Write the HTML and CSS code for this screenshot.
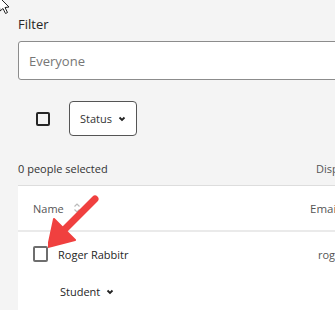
FILE: index.html
```html
<!DOCTYPE html>
<html>
<head>
<meta charset="utf-8">
<link rel="stylesheet" href="styles.css">
</head>
<body>
<div class="page">
  <div class="filter-label">Filter</div>
  <div class="filter-input">Everyone</div>
  <div class="toolbar">
    <span class="checkbox dark"></span>
    <button class="status-btn">Status <svg class="chev" width="8" height="6" viewBox="0 0 8 6"><path d="M1.5 1.5 L4 4 L6.5 1.5" fill="none" stroke="#222" stroke-width="1.8"/></svg></button>
  </div>
  <div class="selected-row">
    <span class="sel-text">0 people selected</span>
    <span class="disp">Display</span>
  </div>
  <div class="table">
    <div class="thead">
      <span class="th-name">Name <svg class="sort" width="8" height="12" viewBox="0 0 8 12"><path d="M1.5 4.5 L4 2 L6.5 4.5 M1.5 7.5 L4 10 L6.5 7.5" fill="none" stroke="#bbb" stroke-width="1.2"/></svg></span>
      <span class="th-email">Email</span>
    </div>
    <div class="trow">
      <div class="row-main">
        <span class="checkbox light"></span>
        <span class="name">Roger Rabbitr</span>
        <span class="email">roger</span>
      </div>
      <div class="role">Student <svg class="chev" width="8" height="6" viewBox="0 0 8 6"><path d="M1.5 1.5 L4 4 L6.5 1.5" fill="none" stroke="#222" stroke-width="1.8"/></svg></div>
    </div>
  </div>
</div>
<svg class="cursor" width="14" height="20" viewBox="0 0 14 20"><path d="M-2 -4 L9 7 L5 7.5 L7.5 12.5 L5.5 13.5 L3 8.5 L0 11 Z" fill="#fff" stroke="#222" stroke-width="1"/></svg>
<svg class="arrow" width="70" height="70" viewBox="0 0 70 70"><path d="M47 5 L16 36" stroke="#f0403f" stroke-width="7" stroke-linecap="round" fill="none"/><path d="M0 53 L6 25 L27 46 Z" fill="#f0403f" stroke="#f0403f" stroke-width="2" stroke-linejoin="round"/></svg>
</body>
</html>
```
FILE: styles.css
```css
html, body {
  margin: 0;
  padding: 0;
  background: #f4f4f4;
  overflow: hidden;
  width: 335px;
  height: 310px;
  position: relative;
  font-family: "Open Sans", "Liberation Sans", sans-serif;
  color: #333;
}
.page {
  padding-left: 18px;
  width: 500px;
}
.filter-label {
  font-size: 13px;
  line-height: 20px;
  padding-top: 14px;
  color: #262626;
}
.filter-input {
  margin-top: 7px;
  box-sizing: border-box;
  height: 39px;
  border: 1px solid #8c8c8c;
  border-radius: 3px;
  background: #fff;
  font-size: 13px;
  color: #767676;
  padding-left: 10px;
  display: flex;
  align-items: center;
}
.toolbar {
  display: flex;
  align-items: center;
  margin-top: 21px;
  padding-left: 18px;
  gap: 19px;
  height: 35px;
}
.checkbox {
  display: inline-block;
  box-sizing: border-box;
  width: 14px;
  height: 14px;
  border-radius: 2px;
}
.checkbox.dark {
  border: 2px solid #262626;
}
.checkbox.light {
  width: 15px;
  height: 16px;
  border: 2px solid #6e6e6e;
}
.status-btn {
  font-family: inherit;
  font-size: 11px;
  color: #333;
  height: 35px;
  width: 68px;
  box-sizing: border-box;
  border: 1px solid #555;
  border-radius: 4px;
  background: #fff;
  padding: 0 0 0 10px;
  display: flex;
  align-items: center;
  gap: 6px;
}
.chev {
  display: block;
}
.selected-row {
  display: flex;
  font-size: 11px;
  line-height: 17px;
  padding-top: 24px;
  padding-bottom: 8px;
  align-items: center;
}
.sel-text {
  width: 298px;
  color: #333;
}
.disp {
  color: #555;
}
.table {
  background: #fff;
  border-top: 1px solid #ddd;
  padding-bottom: 40px;
}
.thead {
  display: flex;
  align-items: center;
  height: 44px;
  border-bottom: 2px solid #eaeaea;
  font-size: 11.5px;
  color: #555;
}
.th-name {
  padding-left: 15px;
  width: 277px;
  display: flex;
  align-items: center;
  gap: 9px;
  font-size: 11px;
}
.sort { display: block; }
.row-main {
  display: flex;
  align-items: center;
  padding-top: 14px;
  padding-left: 15px;
  font-size: 11px;
  color: #262626;
}
.name {
  margin-left: 10px;
  width: 260px;
}
.email { color: #555; }
.role {
  display: flex;
  align-items: center;
  gap: 6px;
  font-size: 11px;
  color: #262626;
  padding-left: 42px;
  margin-top: 22px;
}
.cursor {
  position: absolute;
  left: 0;
  top: 0;
}
.arrow {
  position: absolute;
  left: 48px;
  top: 194px;
}
```
